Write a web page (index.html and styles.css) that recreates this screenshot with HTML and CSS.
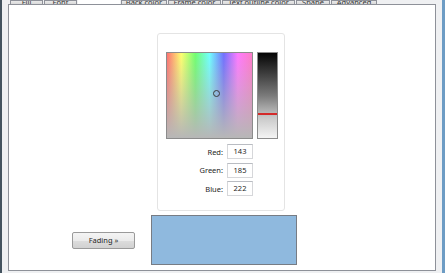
FILE: index.html
```html
<!DOCTYPE html>
<html lang="en">
<head>
  <meta charset="UTF-8">
  <title>Fill color</title>
  <link rel="stylesheet" href="styles.css">
</head>
<body>
  <div class="window">
    <div class="dialog">
      <!-- Tabs -->
      <div class="tabs">
        <div class="tab"><span>Fill</span></div>
        <div class="tab"><span>Font</span></div>
        <div class="tab selected"><span>Fill color</span></div>
        <div class="tab"><span>Back color</span></div>
        <div class="tab"><span>Frame color</span></div>
        <div class="tab"><span>Text outline color</span></div>
        <div class="tab"><span>Shape</span></div>
        <div class="tab"><span>Advanced</span></div>
      </div>

      <!-- Tab page -->
      <div class="page">
        <div class="picker">
          <div class="picker-top">
            <div class="hue-box">
              <div class="marker"></div>
            </div>
            <div class="light-bar">
              <div class="light-line"></div>
            </div>
          </div>
          <div class="fields">
            <label>Red:</label><div class="field">143</div>
            <label>Green:</label><div class="field">185</div>
            <label>Blue:</label><div class="field">222</div>
          </div>
        </div>

        <div class="bottom-row">
          <button class="btn">Fading &raquo;</button>
          <div class="swatch"></div>
        </div>
      </div>
    </div>
  </div>
</body>
</html>
```

FILE: styles.css
```css
* {
  margin: 0;
  padding: 0;
  box-sizing: border-box;
}
body {
  font-family: "Noto Sans", "Open Sans", sans-serif;
  font-size: 7.5px;
  color: #1e1e1e;
  background: #f0f0f0;
}
/* Window frame */
.window {
  width: 445px;
  height: 273px;
  display: flex;
  border-left: 2px solid #44535f;
  border-right: 3px solid #6d9cc4;
}
.dialog {
  flex: 1;
  display: flex;
  flex-direction: column;
  padding: 0 6px 2px 6px;
  background: #eff0f2;
}
/* Tabs (cut off at the top of the picture) */
.tabs {
  display: flex;
  height: 4px;
  padding-left: 2px;
  gap: 1px;
}
.tab {
  height: 4px;
  overflow: hidden;
  display: flex;
  align-items: flex-end;
  justify-content: center;
  border: 1px solid #8e9199;
  border-bottom: none;
  background: linear-gradient(to bottom, #eaeaea, #d9d9d9);
  color: #333;
}
.tab span {
  line-height: 9px;
  white-space: nowrap;
  margin-bottom: -3px;
}
.tab.selected {
  background: #fff;
  border-color: #fff;
  height: 5px;
  margin-bottom: -1px;
}
.tab.selected span {
  margin-bottom: 5px;
}
.tab:nth-child(1) { width: 33px; }
.tab:nth-child(2) { width: 33px; }
.tab:nth-child(3) { width: 42px; }
.tab:nth-child(4) { width: 46px; }
.tab:nth-child(5) { width: 53px; }
.tab:nth-child(6) { width: 73px; }
.tab:nth-child(7) { width: 34px; }
.tab:nth-child(8) { width: 46px; }

.page {
  flex: 1;
  background: #fff;
  border: 1px solid #8e9199;
  padding-top: 28px;
}
/* Color picker card */
.picker {
  width: 128px;
  margin-left: 148px;
  border: 1px solid #e4e4e4;
  border-radius: 3px;
  padding: 18px 6px 14px 8px;
}
.picker-top {
  display: flex;
  gap: 4px;
}
.hue-box {
  position: relative;
  width: 87px;
  height: 87px;
  border: 1px solid #8c8c8c;
  background:
    linear-gradient(to bottom, rgba(183, 183, 183, 0), rgb(183, 183, 183)),
    linear-gradient(to right,
      hsl(0, 100%, 72%), hsl(60, 100%, 72%), hsl(120, 100%, 72%),
      hsl(180, 100%, 72%), hsl(240, 100%, 72%), hsl(300, 100%, 74%),
      hsl(325, 100%, 74%));
}
.marker {
  position: absolute;
  left: 46px;
  top: 37px;
  width: 7px;
  height: 7px;
  border: 1.5px solid #3a3a3a;
  border-radius: 50%;
}
.light-bar {
  position: relative;
  width: 21px;
  height: 87px;
  border: 1px solid #8c8c8c;
  background: linear-gradient(to bottom, #050505, #7a7a7a 50%, #c9c9c9 76%, #f4f4f4);
}
.light-line {
  position: absolute;
  left: 0;
  right: 0;
  top: 60px;
  height: 2px;
  background: #d42a2a;
}
.fields {
  width: 87px;
  margin-top: 5px;
  display: grid;
  grid-template-columns: auto 26px;
  justify-content: end;
  align-items: center;
  column-gap: 4px;
  row-gap: 3.5px;
}
.fields label {
  text-align: right;
}
.field {
  height: 15px;
  border: 1px solid #d6d7da;
  border-top-color: #b9bcc2;
  text-align: center;
  line-height: 13px;
}
/* Bottom row: fading button and preview */
.bottom-row {
  display: flex;
  align-items: center;
  gap: 16px;
  margin-top: 4px;
  padding-left: 63px;
}
.btn {
  width: 63px;
  height: 17px;
  font-family: inherit;
  font-size: 7.5px;
  color: #1e1e1e;
  border: 1px solid #9a9a9a;
  border-radius: 2px;
  background: linear-gradient(to bottom, #f4f4f4 0%, #ebebeb 50%, #dddddd 51%, #d1d1d1 100%);
}
.swatch {
  width: 146px;
  height: 50px;
  border: 1px solid #777c84;
  background: rgb(143, 185, 222);
}
```
